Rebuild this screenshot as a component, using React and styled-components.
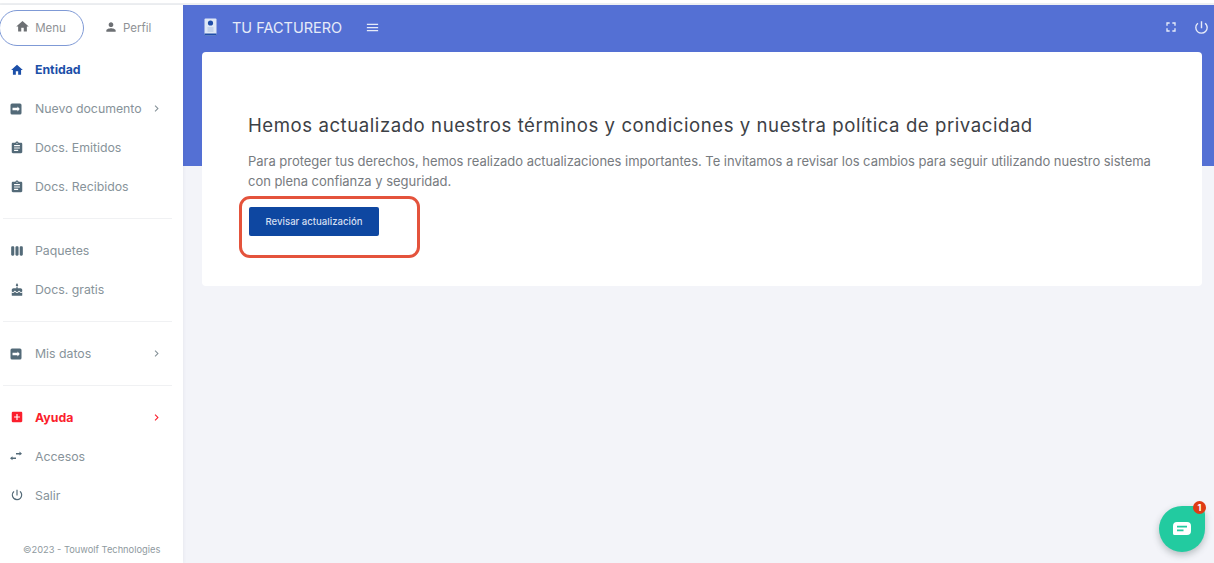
import styled, { createGlobalStyle } from "styled-components"
import {
  MdHome, MdPerson, MdAssignment, MdViewWeek, MdCake, MdPowerSettingsNew,
  MdMenu, MdFullscreen, MdChevronRight, MdAddBox
} from "react-icons/md"

const GlobalStyle = createGlobalStyle`
  html, body {
    margin: 0;
    height: 100%;
    overflow: hidden;
    background: #f3f4f9;
    font-family: Inter, "Open Sans", sans-serif;
  }
  * { box-sizing: border-box; }
`

const BoxArrowIcon = () => (
  <svg width="12" height="12" viewBox="0 0 12 12">
    <rect x="0.5" y="0.5" width="11" height="11" rx="1.5" fill="currentColor" />
    <path d="M2.5 4.8h5V3.6L9.8 6 7.5 8.4V7.2h-5z" fill="#fff" />
  </svg>
)

const SwapIcon = () => (
  <svg width="12" height="12" viewBox="0 0 12 12" fill="currentColor">
    <path d="M6 3h3.5V1.6L12 3.7 9.5 5.6V4.4H6z" />
    <path d="M6 9H2.5v1.2L0 8.2l2.5-2v1.3H6z" />
  </svg>
)

const LogoIcon = () => (
  <svg width="13" height="18" viewBox="0 0 13 18">
    <rect x="0.5" y="0.5" width="12" height="17" rx="1" fill="#dfe8f6" />
    <rect x="0.5" y="15.5" width="12" height="2" fill="#1f4da8" />
    <circle cx="6.5" cy="5" r="2.6" fill="#1f4da8" />
    <rect x="3.5" y="9" width="6" height="5" fill="#c4d3ec" />
  </svg>
)

const ChatIcon = () => (
  <svg width="20" height="16" viewBox="0 0 20 16">
    <path d="M5 1h10a4 4 0 0 1 4 4v5a4 4 0 0 1-4 4H2.5a1.5 1.5 0 0 1-1.5-1.5V5a4 4 0 0 1 4-4z" fill="#fff" />
    <path d="M5 5.6h10M5 9.4h6.5" stroke="#22cba0" strokeWidth="1.7" />
  </svg>
)

const sections = [
  [
    { icon: <MdHome size={14} />, label: "Entidad", tone: "active" },
    { icon: <BoxArrowIcon />, label: "Nuevo documento", arrow: true },
    { icon: <MdAssignment size={14} />, label: "Docs. Emitidos" },
    { icon: <MdAssignment size={14} />, label: "Docs. Recibidos" }
  ],
  [
    { icon: <MdViewWeek size={14} />, label: "Paquetes" },
    { icon: <MdCake size={14} />, label: "Docs. gratis" }
  ],
  [{ icon: <BoxArrowIcon />, label: "Mis datos", arrow: true }],
  [
    { icon: <MdAddBox size={14} />, label: "Ayuda", tone: "danger", arrow: true },
    { icon: <SwapIcon />, label: "Accesos" },
    { icon: <MdPowerSettingsNew size={14} />, label: "Salir" }
  ]
]

const App = () => {
  return (
    <>
      <GlobalStyle />
      <TopStrip />
      <Layout>
        <Sidebar>
          <Tabs>
            <MenuTab><MdHome size={15} />Menu</MenuTab>
            <ProfileTab><MdPerson size={14} />Perfil</ProfileTab>
          </Tabs>
          {sections.map((section, i) => (
            <Section key={i} last={i === sections.length - 1}>
              {section.map(item => (
                <Item key={item.label} tone={item.tone}>
                  <ItemIcon tone={item.tone}>{item.icon}</ItemIcon>
                  <ItemLabel>{item.label}</ItemLabel>
                  {item.arrow && <Chevron><MdChevronRight size={13} /></Chevron>}
                </Item>
              ))}
            </Section>
          ))}
          <Copy>©2023 - Touwolf Technologies</Copy>
        </Sidebar>
        <Main>
          <Banner>
            <Header>
              <Brand>
                <LogoIcon />
                <BrandName>TU FACTURERO</BrandName>
                <MdMenu size={15} />
              </Brand>
              <HeaderActions>
                <MdFullscreen size={16} />
                <MdPowerSettingsNew size={17} />
              </HeaderActions>
            </Header>
          </Banner>
          <Card>
            <CardTitle>Hemos actualizado nuestros términos y condiciones y nuestra política de privacidad</CardTitle>
            <CardText>
              Para proteger tus derechos, hemos realizado actualizaciones importantes. Te invitamos a revisar los cambios para seguir utilizando nuestro sistema con plena confianza y seguridad.
            </CardText>
            <ButtonWrap>
              <ReviewButton>Revisar actualización</ReviewButton>
              <Highlight />
            </ButtonWrap>
          </Card>
        </Main>
      </Layout>
      <ChatBubble>
        <ChatIcon />
        <Badge>1</Badge>
      </ChatBubble>
    </>
  )
}

export default App

const TopStrip = styled.div`
  height: 5px;
  background: #fff;
  border-bottom: 2px solid #eef0f2;
`
const Layout = styled.div`
  display: flex;
  height: 558px;
`
const Sidebar = styled.aside`
  width: 183px;
  flex: none;
  background: #fff;
  padding: 5px 11px 0 3px;
  display: flex;
  flex-direction: column;
  box-shadow: 1px 0 3px rgba(60, 70, 110, 0.06);
  z-index: 1;
`
const Tabs = styled.div`
  display: flex;
  align-items: center;
  margin-left: -4px;
  font-size: 11.5px;
  color: #8f9296;
`
const MenuTab = styled.div`
  width: 85px;
  height: 36px;
  padding-right: 2px;
  border: 1.5px solid #7f9ad6;
  border-radius: 18px;
  display: flex;
  align-items: center;
  justify-content: center;
  gap: 5px;
  svg { color: #6d7074; margin-top: -3px; }
`
const ProfileTab = styled.div`
  margin-left: 20px;
  display: flex;
  align-items: center;
  gap: 5px;
  svg { color: #6d7074; margin-top: -3px; }
`
const Section = styled.div`
  padding: 12px 0;
  border-bottom: ${props => props.last ? "none" : "1px solid #f0f1f3"};
  &:nth-child(2) { padding-top: 4px; }
  &:nth-child(5) { padding-top: 11.5px; padding-bottom: 0; }
`
const Item = styled.div`
  height: 39px;
  display: flex;
  align-items: center;
  padding-left: 7px;
  font-size: 12.3px;
  font-weight: ${props => props.tone ? 700 : 400};
  color: ${props =>
    props.tone === "active" ? "#1c4fa8" :
    props.tone === "danger" ? "#fb1f2d" : "#87939a"};
`
const ItemIcon = styled.span`
  width: 25px;
  display: flex;
  align-items: center;
  color: ${props =>
    props.tone === "active" ? "#1c4fa8" :
    props.tone === "danger" ? "#fb1f2d" : "#536a78"};
`
const ItemLabel = styled.span`
  white-space: nowrap;
`
const Chevron = styled.span`
  display: flex;
  margin-left: auto;
  margin-right: 9px;
`
const Copy = styled.div`
  margin-top: auto;
  padding-bottom: 8px;
  padding-left: 20px;
  font-size: 9.3px;
  color: #8f9aa0;
  white-space: nowrap;
`
const Main = styled.main`
  flex: 1;
  min-width: 0;
`
const Banner = styled.div`
  height: 161px;
  background: #5470d4;
`
const Header = styled.header`
  height: 47px;
  padding: 0 4px 3px 21px;
  display: flex;
  align-items: center;
  justify-content: space-between;
  color: #e6ebf8;
`
const Brand = styled.div`
  display: flex;
  align-items: center;
  svg:last-child { margin-left: 23px; }
`
const BrandName = styled.span`
  margin-left: 15px;
  font-size: 14.5px;
  font-weight: 400;
  color: #e6ebf8;
`
const HeaderActions = styled.div`
  display: flex;
  align-items: center;
  gap: 14px;
`
const Card = styled.section`
  margin: -114px 12px 0 19px;
  height: 234px;
  position: relative;
  background: #fff;
  border-radius: 4px;
  padding: 61px 46px 0;
`
const CardTitle = styled.h1`
  margin: 0;
  font-size: 18.6px;
  line-height: 24px;
  font-weight: 400;
  letter-spacing: 0.55px;
  color: #3d4146;
  white-space: nowrap;
`
const CardText = styled.p`
  margin: 14px 0 0;
  font-size: 13px;
  line-height: 20px;
  letter-spacing: -0.03px;
  color: #777b80;
`
const ButtonWrap = styled.div`
  position: relative;
  width: 130px;
  margin: 16px 0 0 1px;
`
const ReviewButton = styled.button`
  width: 130px;
  height: 29px;
  border: none;
  border-radius: 2px;
  background: #0e47a1;
  color: #d5dff1;
  font-family: inherit;
  font-size: 9.6px;
  font-weight: 500;
  padding: 0;
`
const Highlight = styled.div`
  position: absolute;
  left: -10px;
  top: -11px;
  width: 181px;
  height: 62px;
  border: 3px solid #e4533c;
  border-radius: 11px;
  pointer-events: none;
`
const ChatBubble = styled.div`
  position: absolute;
  left: 1159px;
  top: 506px;
  width: 46px;
  height: 46px;
  border-radius: 50% 8px 50% 50%;
  background: #22cba0;
  box-shadow: 0 3px 7px rgba(40, 60, 60, 0.3);
  display: flex;
  align-items: center;
  justify-content: center;
`
const Badge = styled.span`
  position: absolute;
  right: -1px;
  top: -5px;
  width: 13px;
  height: 13px;
  border-radius: 50%;
  background: #df3b14;
  color: #fff;
  font-size: 9px;
  font-weight: 700;
  line-height: 13px;
  text-align: center;
`
